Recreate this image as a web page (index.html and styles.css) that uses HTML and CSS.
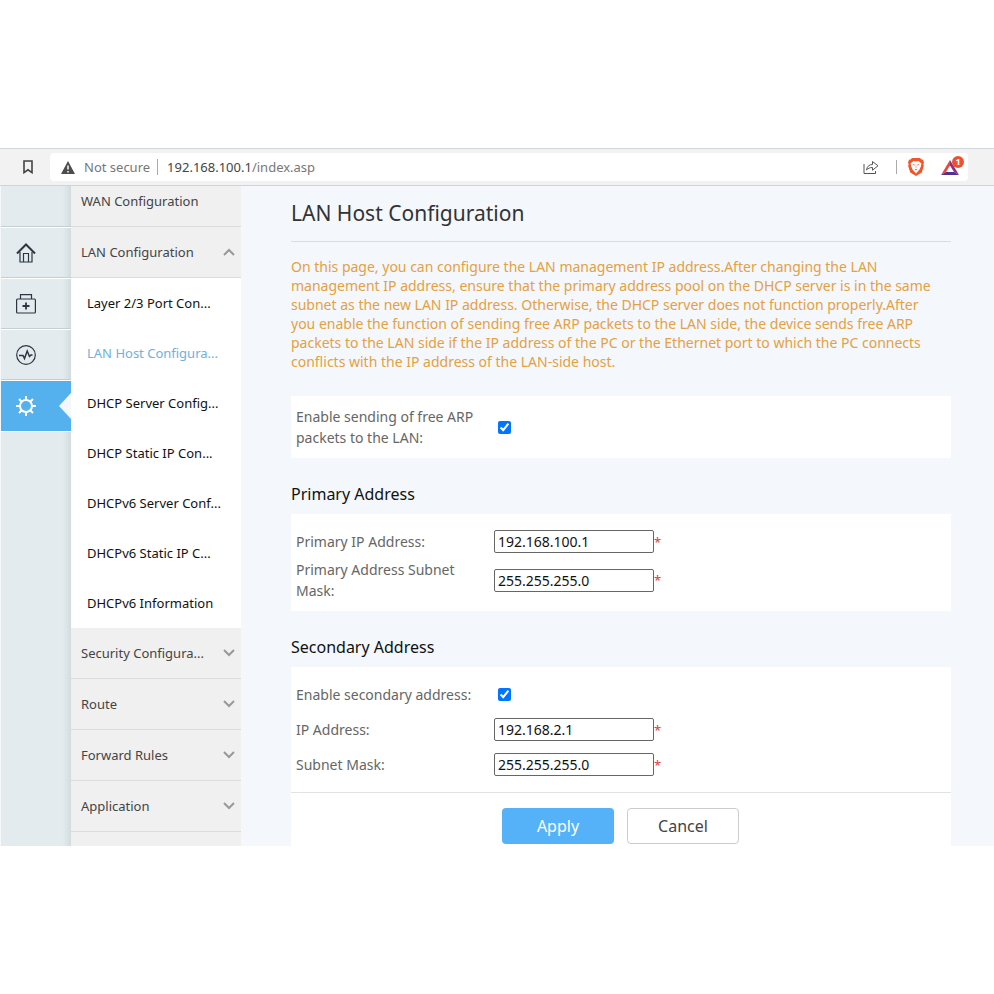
FILE: index.html
```html
<!DOCTYPE html>
<html lang="en">
    <head>
        <meta charset="UTF-8">
        <meta name="viewport" content="width=device-width, initial-scale=1.0">
        <title>LAN Host Configuration</title>
        <link rel="stylesheet" href="styles.css">
    </head>
    <body>
        <div class="window">
            <header class="toolbar">
                <button class="bookmark" aria-label="Bookmark">
                    <svg width="10" height="14" viewBox="0 0 10 14"><path d="M1 1h8v11.6L5 9.8 1 12.6z" fill="none" stroke="#444" stroke-width="1.6"/></svg>
                </button>
                <div class="address-bar">
                    <svg class="warning" width="14" height="13" viewBox="0 0 14 13"><path d="M7 0l7 13H0z" fill="#4d4d4d"/><path d="M7 4.5v4M7 10v1.5" stroke="#fff" stroke-width="1.5"/></svg>
                    <span class="not-secure">Not secure</span>
                    <span class="url"><span class="host">192.168.100.1</span>/index.asp</span>
                    <button class="share" aria-label="Share">
                        <svg width="16" height="14" viewBox="0 0 16 14"><path d="M1 4v9.500h11.500V11" fill="none" stroke="#555"/><path d="M3.500 10c.6-3.800 2.800-5.500 6-5.500V1.500l5.500 4.300-5.500 4.400V7.500c-2.600 0-4.500.8-6 2.500z" fill="none" stroke="#555" stroke-linejoin="round"/></svg>
                    </button>
                    <button class="shields" aria-label="Shields">
                        <svg width="16" height="18" viewBox="0 0 16 18"><path d="M4 0h8l1.500 1.600L15 1.800l1 2.600-.6 1.600.4 2-2 6.500L8 18l-5.800-3.500L.2 8l.4-2L0 4.400l1-2.600 1.500-.2z" fill="#f1562b"/><path d="M5.500 3L8 3.500 10.500 3 13.400 5.500 12.800 8.500 11.500 11.500 8 15.500 4.500 11.500 3.200 8.500 2.600 5.500z" fill="#fff"/><path d="M4.500 6l2.200.6-.5 1.200zM11.500 6l-2.200.6.5 1.200zM6.500 10.500L8 11.300l1.500-.8L8 12.800z" fill="#f1562b"/><path d="M8 7v3" stroke="#f9b49d" stroke-width="1"/></svg>
                    </button>
                    <button class="rewards" aria-label="Rewards">
                        <svg width="18" height="15" viewBox="0 0 18 15"><path d="M9 0L0 15l5-3 4-6.500z" fill="#e8483f"/><path d="M9 0l9 15-5-3-4-6.500z" fill="#8e2f86"/><path d="M0 15h18l-5-3H5z" fill="#4f3191"/></svg>
                        <span class="badge">1</span>
                    </button>
                </div>
            </header>

            <div class="page">
                <nav class="rail">
                    <a class="rail-item" href="#" aria-label="Overview"></a>
                    <a class="rail-item" href="#" aria-label="Home">
                        <svg width="20" height="20" viewBox="0 0 20 20" fill="none" stroke="#2c3640"><path d="M1 10.500L10 1.500l9 9" stroke-width="2"/><path d="M4 9v10h12V9M7.500 19v-8.500h5V19" stroke-width="1.200"/></svg>
                    </a>
                    <a class="rail-item" href="#" aria-label="Maintenance">
                        <svg width="20" height="20" viewBox="0 0 20 20" fill="none" stroke="#2c3640"><rect x=".6" y="5" width="18.800" height="14" rx="1" stroke-width="1.200"/><path d="M4.500 5V.7h11V5" stroke-width="1.200"/><path d="M10 8.500v7M6.500 12h7" stroke-width="1.800"/></svg>
                    </a>
                    <a class="rail-item" href="#" aria-label="Diagnosis">
                        <svg width="20" height="20" viewBox="0 0 20 20" fill="none" stroke="#2c3640"><circle cx="10" cy="10" r="9.300" stroke-width="1.200"/><path d="M3 10.500h4l1.500 3 2.700-7.500 2.300 5.500 1.500-1.500h1.500" stroke-width="1.500"/></svg>
                    </a>
                    <a class="rail-item current" href="#" aria-label="Settings">
                        <svg width="20" height="20" viewBox="0 0 20 20" fill="none" stroke="#fff" stroke-width="2"><circle cx="10" cy="10" r="6"/><path d="M10 0v4M10 16v4M0 10h4M16 10h4M3 3l2.800 2.800M14.200 14.200L17 17M3 17l2.800-2.800M14.200 5.800L17 3"/></svg>
                    </a>
                </nav>

                <nav class="menu">
                    <a class="menu-item" href="#">WAN Configuration</a>
                    <a class="menu-item" href="#">LAN Configuration
                        <svg class="arrow" width="12" height="8" viewBox="0 0 12 8"><path d="M1 7l5-5 5 5"/></svg>
                    </a>
                    <div class="submenu">
                        <a href="#">Layer 2/3 Port Con...</a>
                        <a class="selected" href="#">LAN Host Configura...</a>
                        <a href="#">DHCP Server Config...</a>
                        <a href="#">DHCP Static IP Con...</a>
                        <a href="#">DHCPv6 Server Conf...</a>
                        <a href="#">DHCPv6 Static IP C...</a>
                        <a href="#">DHCPv6 Information</a>
                    </div>
                    <a class="menu-item" href="#">Security Configura...
                        <svg class="arrow" width="12" height="8" viewBox="0 0 12 8"><path d="M1 1l5 5 5-5"/></svg>
                    </a>
                    <a class="menu-item" href="#">Route
                        <svg class="arrow" width="12" height="8" viewBox="0 0 12 8"><path d="M1 1l5 5 5-5"/></svg>
                    </a>
                    <a class="menu-item" href="#">Forward Rules
                        <svg class="arrow" width="12" height="8" viewBox="0 0 12 8"><path d="M1 1l5 5 5-5"/></svg>
                    </a>
                    <a class="menu-item" href="#">Application
                        <svg class="arrow" width="12" height="8" viewBox="0 0 12 8"><path d="M1 1l5 5 5-5"/></svg>
                    </a>
                </nav>

                <main class="content">
                    <h1>LAN Host Configuration</h1>
                    <p class="hint">On this page, you can configure the LAN management IP address.After changing the LAN management IP address, ensure that the primary address pool on the DHCP server is in the same subnet as the new LAN IP address. Otherwise, the DHCP server does not function properly.After you enable the function of sending free ARP packets to the LAN side, the device sends free ARP packets to the LAN side if the IP address of the PC or the Ethernet port to which the PC connects conflicts with the IP address of the LAN-side host.</p>

                    <form class="settings">
                        <div class="panel">
                            <div class="row">
                                <label for="arp">Enable sending of free ARP packets to the LAN:</label>
                                <input type="checkbox" id="arp" checked>
                            </div>
                        </div>

                        <h2>Primary Address</h2>
                        <div class="panel">
                            <div class="row">
                                <label for="primary-ip">Primary IP Address:</label>
                                <input type="text" id="primary-ip" value="192.168.100.1"><span class="required">*</span>
                            </div>
                            <div class="row">
                                <label for="primary-mask">Primary Address Subnet Mask:</label>
                                <input type="text" id="primary-mask" value="255.255.255.0"><span class="required">*</span>
                            </div>
                        </div>

                        <h2>Secondary Address</h2>
                        <div class="panel">
                            <div class="row">
                                <label for="secondary">Enable secondary address:</label>
                                <input type="checkbox" id="secondary" checked>
                            </div>
                            <div class="row">
                                <label for="second-ip">IP Address:</label>
                                <input type="text" id="second-ip" value="192.168.2.1"><span class="required">*</span>
                            </div>
                            <div class="row">
                                <label for="second-mask">Subnet Mask:</label>
                                <input type="text" id="second-mask" value="255.255.255.0"><span class="required">*</span>
                            </div>
                        </div>
                        <div class="buttons">
                            <button type="button" class="apply">Apply</button>
                            <button type="button" class="cancel">Cancel</button>
                        </div>
                    </form>
                </main>
            </div>
        </div>
    </body>
</html>
```
FILE: styles.css
```css
*{
    box-sizing: border-box;
}

body{
    margin: 0;
    background-color: white;
    font-family: "Noto Sans", "Open Sans", sans-serif;
    font-size: 14px;
}

a{
    color: inherit;
    text-decoration: none;
}

button{
    font-family: inherit;
    padding: 0;
    border: none;
    background: none;
}

svg{
    display: block;
}

.window{
    height: 100vh;
    padding: 148px 0;
    display: flex;
    flex-direction: column;
}

/* browser bar */

.toolbar{
    display: flex;
    align-items: center;
    height: 38px;
    flex: none;
    background-color: #f2f2f3;
    border-top: 1px solid #d0d6de;
    border-bottom: 1px solid #d0d3d8;
    padding-right: 26px;
    font-size: 13px;
}

.bookmark{
    width: 50px;
    padding-left: 23px;
}

.address-bar{
    flex: 1;
    display: flex;
    align-items: center;
    height: 28px;
    padding: 0 6px 0 11px;
    border-radius: 4px;
    background-color: white;
    color: #777;
}

.not-secure{
    margin-left: 9px;
    padding-right: 7px;
    border-right: 1px solid #aaa;
    line-height: 16px;
}

.url{
    flex: 1;
    margin-left: 9px;
}

.host{
    color: #444;
}

.share{
    padding-right: 17px;
    border-right: 1px solid #aaa;
}

.shields{
    margin-left: 11px;
}

.rewards{
    position: relative;
    margin-left: 17px;
    padding-right: 3px;
}

.badge{
    position: absolute;
    top: -4px;
    right: -2px;
    width: 12px;
    height: 12px;
    border-radius: 50%;
    background-color: #ef5030;
    color: white;
    font-size: 9px;
    font-weight: bold;
    line-height: 12px;
}

/* router page */

.page{
    flex: 1;
    min-height: 0;
    display: flex;
    overflow: hidden;
    background-color: #f4f8fd;
}

.rail{
    width: 71px;
    flex: none;
    border-left: 1px solid #f5f8f9;
    background: linear-gradient(to right, #e3ebee 88%, #d2dcde);
}

.rail-item{
    display: flex;
    align-items: center;
    height: 51px;
    padding: 2px 0 0 15px;
    border-bottom: 1px solid #c5cfd2;
    box-shadow: 0 1px white;
}

.rail-item:first-child, .menu-item:first-child{
    margin-top: -10px;
}

.rail-item.current{
    justify-content: space-between;
    background-color: #55b0ee;
    border-bottom-color: #55b0ee;
    box-shadow: inset 0 1px white, 0 1px white;
}

.rail-item.current::after{
    content: "";
    border: 13px solid transparent;
    border-left: none;
    border-right: 12px solid #f4f8fd;
}

.menu{
    width: 170px;
    flex: none;
    background-color: #f0f0f0;
    color: #444;
    font-size: 13px;
}

.menu-item{
    display: flex;
    align-items: center;
    justify-content: space-between;
    height: 51px;
    padding: 0 6px 0 10px;
    border-bottom: 1px solid #dcdcdc;
}

.arrow{
    fill: none;
    stroke: #999;
    stroke-width: 2;
}

.submenu{
    background-color: white;
    color: #111;
}

.submenu a{
    display: block;
    line-height: 50px;
    padding-left: 16px;
}

.submenu .selected{
    color: #6fb1e0;
}

.content{
    flex: 1;
    padding: 0 43px 0 50px;
}

h1{
    margin: 0;
    padding: 14px 0;
    border-bottom: 1px solid #d8dde3;
    color: #333;
    font-size: 21px;
    font-weight: normal;
    line-height: 27px;
}

.hint{
    margin: 15px 0 25px;
    padding-right: 10px;
    color: #e5a03f;
    line-height: 19px;
}

h2{
    margin: 0;
    padding-top: 16px;
    color: #111;
    font-size: 16px;
    font-weight: normal;
    line-height: 40px;
}

.panel{
    padding: 10px 5px;
    background-color: white;
    color: #666;
}

.row{
    display: flex;
    align-items: center;
    min-height: 35px;
}

.row label{
    width: 198px;
    padding-right: 10px;
    line-height: 21px;
}

.row input[type="checkbox"]{
    width: 13px;
    height: 13px;
    margin: 0 4px;
}

.row input[type="text"]{
    width: 160px;
    height: 23px;
    padding: 0 3px;
    border: 1px solid #666;
    border-radius: 2px;
    color: #111;
    font-family: inherit;
    font-size: 14px;
}

.required{
    color: #e04040;
    font-size: 13px;
}

.buttons{
    display: flex;
    gap: 13px;
    padding: 15px 0 15px 211px;
    border-top: 1px solid #dfe3e6;
    background-color: white;
}

.buttons button{
    width: 112px;
    height: 36px;
    border-radius: 4px;
    font-size: 16px;
}

.apply{
    background-color: #56b2f8;
    color: white;
}

.buttons .cancel{
    border: 1px solid #ccc;
    color: #444;
}
```
